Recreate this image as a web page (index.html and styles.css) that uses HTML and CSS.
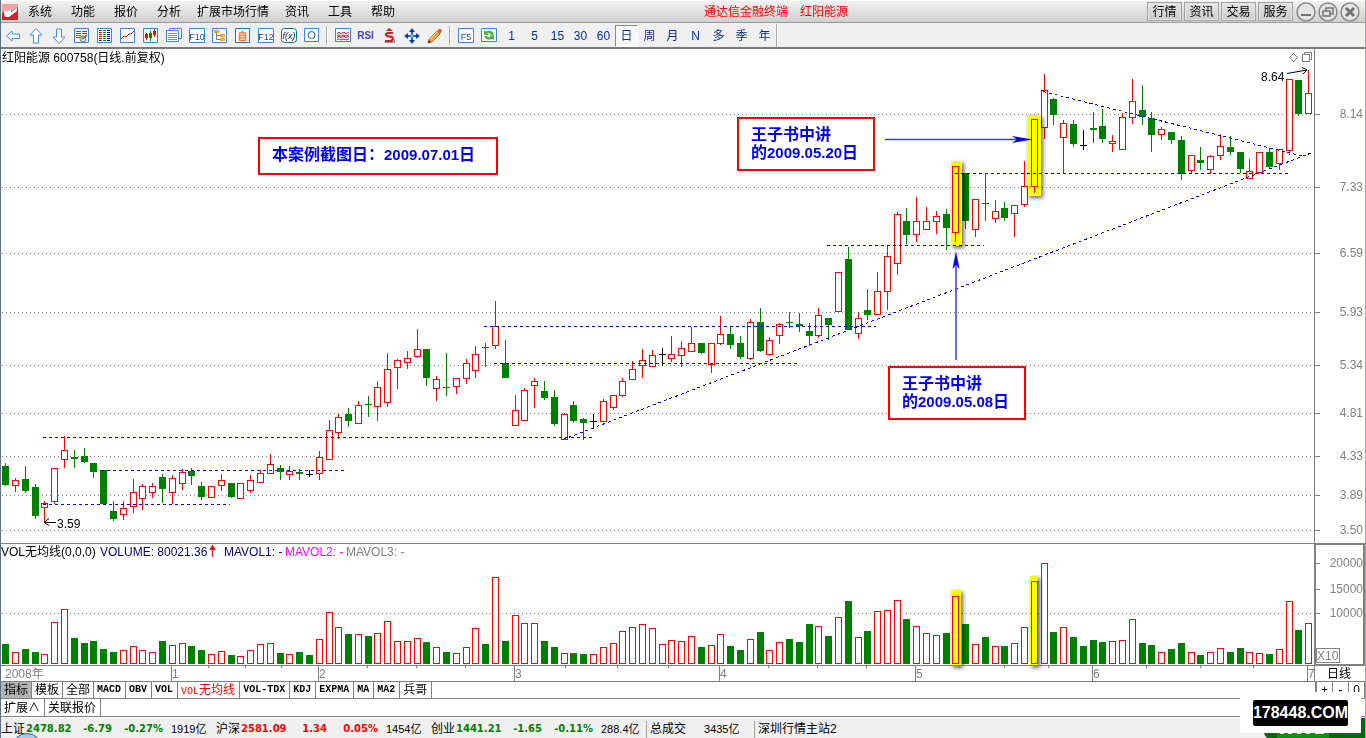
FILE: index.html
```html
<!DOCTYPE html>
<html lang="zh-CN">
<head>
<meta charset="utf-8">
<title>通达信金融终端 红阳能源</title>
<link rel="stylesheet" href="styles.css">
</head>
<body>
<div class="app">
  <header class="menubar">
    <svg class="logo" viewBox="0 0 16 16" aria-hidden="true"><rect width="16" height="16" fill="#d8202a"/><path d="M0 0h16v3l-6 4-2-3-3 5-3-2-2 3z" fill="#f3a3a0"/><path d="M2 6l3 2 4-4v4l6-4v3l-8 6-4 0-1-4z" fill="#fff"/></svg>
    <nav class="menu">
      <button type="button">系统</button><button type="button">功能</button><button type="button">报价</button><button type="button">分析</button><button type="button">扩展市场行情</button><button type="button">资讯</button><button type="button">工具</button><button type="button">帮助</button>
    </nav>
    <h1 class="title"><span>通达信金融终端</span><span>红阳能源</span></h1>
    <div class="links">
      <button type="button">行情</button><button type="button">资讯</button><button type="button">交易</button><button type="button">服务</button>
    </div>
    <div class="window-controls">
      <button type="button" aria-label="最小化"><svg viewBox="0 0 20 20"><circle cx="10" cy="10" r="9"/><path d="M5 13h10" stroke-width="2"/></svg></button>
      <button type="button" aria-label="还原"><svg viewBox="0 0 20 20"><circle cx="10" cy="10" r="9"/><path d="M8 9V6h7v6h-3M5 9h7v5H5z" stroke-width="1.500"/></svg></button>
      <button type="button" aria-label="关闭"><svg viewBox="0 0 20 20"><circle cx="10" cy="10" r="9"/><path d="M6 6l8 8M14 6l-8 8" stroke-width="3"/></svg></button>
    </div>
  </header>

  <div class="toolbar">
    <button type="button" aria-label="后退"><svg viewBox="0 0 16 16"><path class="arrow" d="M1.500 8L7 3v3h7.500v4.500H7V13z"/></svg></button>
    <button type="button" aria-label="上移"><svg viewBox="0 0 16 16"><path class="arrow" d="M8 .5l6 6.500h-3.500v8h-5V7H2z"/></svg></button>
    <button type="button" aria-label="下移"><svg viewBox="0 0 16 16"><path class="arrow" d="M8 15.500L2 9h3.500V1h5v8H14z"/></svg></button>
    <button type="button" aria-label="行情表"><svg viewBox="0 0 16 16"><path class="frame" d="M.5 .5h14v14H.5z"/><path d="M2 3.500h5M2 5.500h5M2 7.500h5M2 9.500h4" stroke="#0a8a1a"/><path d="M8 3.500h5M8 5.500h5" stroke="#d02020"/><circle cx="9" cy="11" r="3" fill="#ddd" stroke="#777"/><path d="M8 11l5-4" stroke="#777" stroke-width="2"/></svg></button>
    <button type="button" aria-label="列表"><svg viewBox="0 0 16 16"><path class="frame" d="M.5 .5h14v14H.5z"/><path d="M2 2.500h3M2 4.500h3M2 6.500h3M2 8.500h3M2 10.500h3M2 12.500h3" stroke="#e01010"/><path d="M6 2.500h3M6 4.500h3M6 6.500h3M6 8.500h3M6 10.500h3M6 12.500h3" stroke="#0a8a1a"/><path d="M10 2.500h3M10 4.500h3M10 6.500h3M10 8.500h3M10 10.500h3M10 12.500h3" stroke="#00f"/></svg></button>
    <button type="button" aria-label="分时图"><svg viewBox="0 0 16 16"><path class="frame" d="M.5 .5h14v14H.5z"/><path d="M1 11l3-3 2 1 3-3 2 0 3-3" fill="none" stroke="#d01010"/></svg></button>
    <button type="button" aria-label="K线图"><svg viewBox="0 0 16 16"><path class="frame" d="M.5 .5h14v14H.5z"/><path d="M3.500 5v7M11.500 1v8" stroke="#e01010"/><path d="M2 6h3v4H2zM10 3h3v4h-3z" fill="#e01010"/><path d="M7.500 3v10" stroke="#080"/><path d="M6 5h3v5H6z" fill="#080"/></svg></button>
    <button type="button" aria-label="多窗口"><svg viewBox="0 0 16 16"><path class="frame" d="M3.500 .5h12v10h-12z"/><path class="frame" d="M.5 2.500h12v11H.5z"/><path d="M2 5.500h9M2 7.500h9M2 9.500h9M2 11.500h9" stroke="#888"/></svg></button>
    <button type="button" aria-label="F10"><svg viewBox="0 0 16 16"><path class="frame" d="M.5 .5h15v14H.5z"/><text x="8" y="12" class="icon-text">F10</text></svg></button>
    <button type="button" aria-label="板块"><svg viewBox="0 0 16 16"><path class="frame" d="M.5 .5h14v14H.5z"/><path d="M4.500 5v6.500h4M4.500 7.500h4" fill="none" stroke="#777"/><path d="M2.500 2.500h4v2h-4zM8.500 6.500h4v2h-4zM8.500 10.500h4v2h-4z" fill="#f8c02c" stroke="#e09a10"/></svg></button>
    <button type="button" aria-label="自选"><svg viewBox="0 0 16 16"><path d="M.5 .5h14v14H.5z" fill="#fff" stroke="#1070e0"/><path d="M4.500 5h6v7.500h-6zM4.500 7.500h6M4.500 10h6M7.500 2.500V5" fill="none" stroke="#f08040" stroke-width="1.600"/></svg></button>
    <button type="button" aria-label="F12"><svg viewBox="0 0 16 16"><path class="frame" d="M.5 .5h15v14H.5z"/><text x="8" y="12" class="icon-text">F12</text></svg></button>
    <button type="button" aria-label="公式"><svg viewBox="0 0 16 16"><rect x=".5" y=".5" width="15" height="14" rx="3" fill="#fff" stroke="#087a7a"/><text x="8" y="11" class="icon-text formula">f(x)</text></svg></button>
    <button type="button" aria-label="定位"><svg viewBox="0 0 16 16"><path class="frame" d="M.5 .5h14v13H.5z"/><circle cx="7.500" cy="7" r="3.500" fill="none" stroke="#1060d0"/></svg></button>
    <span class="divider"></span>
    <button type="button" aria-label="叠加"><svg viewBox="0 0 16 16"><path class="frame" d="M.5 .5h15v13H.5z"/><path d="M2 6l2-2 2 2 3-2 2 2 3-2" fill="none" stroke="#e01010"/><path d="M2 10l2-2 2 2 3-2 2 2 3-2" fill="none" stroke="#e01010"/><path d="M2 12l2-1 2 1 3-1 2 1 3-1M2 8l2-1 2 1 3-1 2 1 3-1" fill="none" stroke="#2060e0"/></svg></button>
    <button type="button" class="rsi">RSI</button>
    <button type="button" aria-label="资金"><svg viewBox="0 0 16 16"><path d="M3 14h8l3-3v4H4z" fill="#999"/><path d="M12 5H6.500L5 6.500 6 8l5 1 1 2-1.500 2H4" fill="none" stroke="#c8202a" stroke-width="2.200"/><path d="M8 0l4 3H5z" fill="#c8202a"/></svg></button>
    <button type="button" aria-label="移动"><svg viewBox="0 0 16 16"><path d="M8 0l3 4H5zM8 16l3-4H5zM0 8l4-3v6zM16 8l-4-3v6z" fill="#0a3fa0"/><path d="M8 4v8M4 8h8" stroke="#2060c0" stroke-width="2"/><path d="M6.500 6.500h3v3h-3z" fill="#7ab0f0"/></svg></button>
    <button type="button" aria-label="画线"><svg viewBox="0 0 16 16"><path d="M1 15l1-4 8-8 3 3-8 8z" fill="#f3a23a" stroke="#9a5a10" stroke-width=".7"/><path d="M3 11l8-8" stroke="#ffe08a"/><path d="M10 3l2-2h2l1 2-2 3z" fill="#d85a4a"/><path d="M1 15l1-3 2 2z" fill="#333"/></svg></button>
    <span class="divider"></span>
    <button type="button" aria-label="F5"><svg viewBox="0 0 16 16"><path class="frame" d="M.5 .5h15v14H.5z"/><text x="8" y="12" class="icon-text">F5</text></svg></button>
    <button type="button" aria-label="刷新"><svg viewBox="0 0 16 16"><path class="frame" d="M.5 .5h15v13H.5z"/><path d="M3 7V2l2 1.500Q9 1 12.500 5V7H10Q8.500 4.500 6.500 5.500L8 7zM13 7v5l-2-1Q7 13 3.500 9.500V8H6q2 2 3.500 1L8.500 7.500z" fill="#4cb848"/></svg></button>
    <button type="button">1</button><button type="button">5</button><button type="button">15</button><button type="button">30</button><button type="button">60</button><button type="button" class="pressed" aria-pressed="true">日</button><button type="button">周</button><button type="button">月</button><button type="button">N</button><button type="button">多</button><button type="button">季</button><button type="button">年</button>
    <span class="divider end"></span>
  </div>

  <main>
    <svg id="chart" class="chart" viewBox="1 49 1364 633" role="img" aria-label="红阳能源 600758 日线">
      <g id="grid" class="grid"></g>
      <g id="candles" class="crisp"></g>
      <g id="volumes" class="crisp"></g>
      <g class="trend">
        <path d="M43 437.500H592M101 470.500H345M43 504.500H230M484 326.500H876M494 363.500H797M827 245.500H984M955 173.500H1289"/>
        <path d="M563 439.500L1315 151.500M1043 91.500L1304 156.500"/>
      </g>
      <g class="highlight">
        <rect x="951" y="161" width="11" height="85"/>
        <rect x="1027" y="115" width="14" height="81"/>
        <rect x="951" y="590" width="10" height="76"/>
        <rect x="1030" y="576" width="8" height="90"/>
      </g>
      <g class="pointer">
        <path d="M885 139.500H1018M956 360V266"/>
        <path class="head" d="M1012 136l21 3.500-21 3.500 5-3.500zM952.500 269l3.500-18 3.500 18-3.500-4z"/>
      </g>
      <g class="callout">
        <rect x="259" y="138" width="238" height="36"/>
        <text x="272" y="160">本案例截图日：<tspan class="num">2009.07.01</tspan>日</text>
        <rect x="738" y="118" width="136" height="52"/>
        <text x="751" y="140">王子书中讲</text>
        <text x="751" y="158">的<tspan class="num">2009.05.20</tspan>日</text>
        <rect x="889" y="367" width="136" height="52"/>
        <text x="902" y="389">王子书中讲</text>
        <text x="902" y="407">的<tspan class="num">2009.05.08</tspan>日</text>
      </g>
      <g class="label">
        <text x="2" y="62">红阳能源 600758(日线.前复权)</text>
        <text x="1261" y="81">8.64</text>
        <text x="57" y="528">3.59</text>
        <path d="M1287 73.500l20-3.500M1302 67.500l5 2.500-4 4M56 522.500H44M49 518.500l-5 4 5 3"/>
        <text x="1" y="556">VOL无均线(0,0,0)</text>
        <text x="100" y="556" class="navy">VOLUME: 80021.36</text>
        <text x="224" y="556" class="navy">MAVOL1: -</text>
        <text x="285" y="556" class="magenta">MAVOL2: -</text>
        <text x="346" y="556" class="gray">MAVOL3: -</text>
        <path class="up" d="M212.500 557V545M210 549.500l2.500-4 2.500 4z"/>
        <text x="1327" y="678">日线</text>
      </g>
      <g class="axis">
        <path d="M1314.500 49V682M1 543.500H1315M1 665.500H1315M1 681.500H1365"/>
        <path d="M1315 544H1364V665H1315z" class="box"/>
        <path d="M1316.500 648.500h23v14h-23z"/>
        <text x="1317" y="660">X10</text>
        <path d="M1289.500 57.500l4-4 4 4-4 4zM1304.500 54.500v-2h7v7h-2M1302.500 54.500h7v7h-7z"/>
        <text x="5" y="678">2008年</text>
      </g>
      <g id="ticks" class="axis"></g>
    </svg>

    <div class="tabs" role="tablist">
      <button type="button" role="tab" class="active">指标</button><button type="button" role="tab">模板</button><button type="button" role="tab">全部</button><button type="button" role="tab">MACD</button><button type="button" role="tab">OBV</button><button type="button" role="tab">VOL</button><button type="button" role="tab" class="current"><span>VOL</span>无均线</button><button type="button" role="tab">VOL-TDX</button><button type="button" role="tab">KDJ</button><button type="button" role="tab">EXPMA</button><button type="button" role="tab">MA</button><button type="button" role="tab">MA2</button><button type="button" role="tab">兵哥</button>
      <span class="zoom-buttons"><button type="button">+</button><button type="button">-</button><button type="button">0</button></span>
    </div>
    <div class="tabs lower"><button type="button">扩展∧</button><button type="button">关联报价</button></div>
  </main>

  <footer class="status">
    <div class="index down"><span>上证</span><b>2478.82</b><b>-6.79</b><b>-0.27%</b><small>1919亿</small></div>
    <div class="index up"><span>沪深</span><b>2581.09</b><b>1.34</b><b>0.05%</b><small>1454亿</small></div>
    <div class="index down"><span>创业</span><b>1441.21</b><b>-1.65</b><b>-0.11%</b><small>288.4亿</small></div>
    <div class="total"><span>总成交</span><small>3435亿</small></div>
    <div class="host">深圳行情主站2</div>
    <svg class="orb" viewBox="0 0 26 5" aria-hidden="true"><ellipse cx="13" cy="13" rx="14" ry="12.500" fill="#a9c9e6" stroke="#2f6296"/></svg>
  </footer>
  <div class="corner">
    <svg viewBox="0 0 104 20" aria-hidden="true"><path d="M2 0h102v20H6Q0 14 2 0z" fill="#04680c"/><path d="M16 10h52v10H16z" fill="#0b9216"/><path d="M19 15h4m4 0h4m5 0h4m5 0h4m5 0h9" stroke="#ffff9a" stroke-width="2"/></svg>
    <div class="watermark"><span>178448.COM</span></div>
  </div>
</div>
<script src="chart.js"></script>
</body>
</html>
```
FILE: styles.css
```css
* { box-sizing: border-box; }

body {
  margin: 0;
  background: #fff;
  color: #000;
  font: 12px/16px "Liberation Sans", "Noto Sans CJK SC", sans-serif;
}

button {
  margin: 0;
  padding: 0;
  border: 0;
  background: none;
  color: inherit;
  font: inherit;
  white-space: nowrap;
}

.app {
  position: relative;
  overflow: hidden;
  border-left: 1px solid #5f6e80;
  border-right: 1px solid #9aa9b6;
}

/* Menu bar */
.menubar {
  display: flex;
  align-items: center;
  height: 23px;
  border-top: 1px solid #fff;
  border-bottom: 1px solid #9a9a9a;
  background: linear-gradient(#f2f2f2, #cfcfcf);
}
.logo { width: 16px; height: 16px; margin-left: 1px; }
.menu { display: flex; gap: 19px; padding: 0 10px; }
.menu button:nth-child(5), .menu button:nth-child(6) { margin-left: -3px; }
.title {
  display: flex;
  gap: 12px;
  margin: 0 auto;
  color: #f00;
  font: inherit;
}
.links { display: flex; gap: 2px; }
.links button {
  width: 35px;
  height: 19px;
  border: 1px solid #a2a2a2;
  background: linear-gradient(#e6e6e6, #cacaca);
  box-shadow: inset 0 0 0 1px #e4e4e4;
}
.window-controls { display: flex; gap: 2px; padding: 0 5px 0 3px; }
.window-controls button, .window-controls svg { display: block; width: 20px; height: 20px; }
.window-controls svg { fill: none; stroke: #707070; }
.window-controls circle { fill: #e4e4e4; stroke: #8a8a8a; stroke-width: 1.5; }

/* Toolbar */
.toolbar {
  display: flex;
  align-items: center;
  height: 26px;
  padding-top: 1px;
  border-bottom: 2px solid #7a7a7a;
  background: #f0f0f0;
  color: #003399;
}
.toolbar button { width: 23px; height: 22px; text-align: center; }
.toolbar button svg { display: block; width: 16px; height: 16px; margin: 0 auto; overflow: visible; }
.toolbar .pressed { border: 1px solid; border-color: #888 #fff #fff #888; background: #f9f9f9; }
.toolbar .rsi { color: #4343d0; font-weight: bold; font-size: 10px; }
.divider { width: 2px; height: 19px; margin: 0 3px; background: #a8a8a8; border-right: 1px solid #fff; }
.divider.end { height: 23px; margin: 0; }
.arrow { fill: #fff; stroke: #3b8ee8; }
.frame { fill: #fff; stroke: #3b82ea; }
.icon-text { fill: #1747b0; font-size: 9px; text-anchor: middle; }
.formula { fill: #102070; font-style: italic; }

/* Chart */
.chart { display: block; width: 100%; height: auto; }
.crisp, .grid, .trend, .axis { shape-rendering: crispEdges; }
.grid { fill: none; stroke: #808080; stroke-dasharray: 1 3; }
.rise { fill: #fff; stroke: #f00; }
.fall { fill: #008000; stroke: #008000; }
.flat { fill: #000; stroke: #000; }
.trend { fill: none; stroke: #00f; stroke-dasharray: 3 3; }
.highlight { fill: #ff0; mix-blend-mode: multiply; filter: drop-shadow(2px 2px 2px rgba(0, 0, 0, .6)); }
.pointer { fill: none; stroke: #3838ff; stroke-width: 1.5; }
.pointer .head { fill: #00f; stroke: none; }
.callout rect { fill: #fff; stroke: #f00; stroke-width: 2; }
.callout text { fill: #00f; font-size: 16px; font-weight: bold; }
.callout .num { font-size: 15px; }
.label path { fill: none; stroke: #000; }
.label .up { fill: #f00; stroke: #f00; }
.label .navy { fill: #000080; }
.label .magenta { fill: #f0f; }
.label .gray { fill: #808080; }
.axis path { fill: none; stroke: #808080; }
.axis .box { stroke-width: 2; }
.axis text { fill: #808080; }
.axis .end { text-anchor: end; }

/* Indicator tabs */
.tabs {
  display: flex;
  height: 17px;
  border-bottom: 1px solid #808080;
}
.tabs button {
  padding: 0 4px 0 3px;
  border-right: 1px solid #808080;
  font: bold 10px/16px "Liberation Mono", "Noto Sans CJK SC", monospace;
}
.tabs button:nth-child(-n+3), .tabs button:nth-child(13), .tabs .current, .tabs.lower button { font: inherit; }
.tabs button:nth-child(-n+3) { padding: 0 3px; }
.tabs .active { background: #b4b4b4; }
.tabs .current { color: #f00; }
.tabs .current span { font: 10px/16px "Liberation Mono", monospace; }
.tabs.lower { height: 18px; }
.tabs.lower button { padding: 0 4px 0 3px; }
.tabs .zoom-buttons { display: flex; margin-left: auto; border-left: 2px solid #808080; }
.tabs .zoom-buttons button { width: 16px; padding: 0; text-align: center; }

/* Status bar */
.status {
  position: relative;
  display: flex;
  height: 21px;
  padding-top: 3px;
  border-top: 1px solid #fff;
  background: #f0f0f0;
  white-space: nowrap;
}
.index { display: grid; grid-template-columns: 25px 47px 39px 51px 53px; }
.index b { font: bold 10px/16px "DejaVu Sans", sans-serif; }
.index b + b { text-align: right; }
.status small { padding-left: 8px; font-size: 11px; }
.down b { color: #008000; }
.up b { color: #f00; }
.total, .host { padding-left: 3px; border-left: 1px solid #a0a0a0; }
.total { width: 108px; }
.total small { padding-left: 18px; }
.orb { position: absolute; left: 13px; bottom: 0; width: 26px; height: 5px; }

/* Corner mark */
.corner { position: absolute; right: 0; bottom: 0; width: 104px; height: 20px; }
.corner > svg { display: block; width: 104px; height: 20px; }
.watermark {
  position: absolute;
  right: 4px;
  bottom: 5px;
  display: flex;
  align-items: center;
  justify-content: center;
  width: 121px;
  height: 41px;
  background: #fff;
}
.watermark span {
  border-radius: 2px;
  background: #000;
  color: #fff;
  font: bold 16px/26px "Liberation Sans", sans-serif;
}
```
FILE: chart.js
```javascript
// One row per trading day: kind, high, open/close top, open/close bottom, low, volume kind, volume top.
// Kinds: r rise, g fall, k flat. Values are in chart units (y grows downwards).
const days = `
g 463 466 485 486 g 644|r 478 480 486 492 r 652|g 466 479 491 493 g 649|g 484 487 516 519 g 652
r 501 503 508 523 r 654|r 468 468 502 504 r 622|r 436 450 460 468 r 609|g 450 457 459 468 g 638
g 448 456 462 463 g 643|g 463 463 472 478 g 641|g 470 470 504 504 g 649|g 501 511 519 521 g 652
r 501 508 515 520 r 650|r 479 492 507 513 r 646|r 484 486 499 510 r 650|r 483 486 493 498 r 652
g 474 477 489 503 g 641|r 475 478 493 504 r 645|r 469 472 484 490 r 643|g 468 471 476 485 g 646
g 482 486 497 500 g 650|r 486 486 498 498 r 654|r 474 480 486 491 r 651|g 483 483 497 498 g 655
r 483 483 499 499 r 656|r 475 480 491 493 r 650|r 470 473 483 483 r 644|r 454 464 474 474 r 643
g 465 468 472 480 g 653|r 466 471 475 480 r 654|g 469 472 474 480 g 652|k 470 474 475 477 g 655
r 451 457 474 480 r 639|r 420 430 460 460 r 612|r 414 417 433 439 r 627|g 408 414 421 427 g 634
r 401 405 424 424 r 634|g 396 404 405 417 g 636|r 381 387 407 421 r 633|r 353 369 403 407 r 621
r 359 360 368 389 r 641|r 351 358 363 369 r 641|r 329 349 357 358 r 638|g 349 349 378 386 g 642
r 376 379 389 401 r 647|g 353 387 388 396 g 652|r 378 378 387 394 r 653|r 359 363 379 384 r 647
r 346 354 371 378 r 628|g 343 347 348 367 g 644|r 301 326 346 349 r 577|g 340 363 378 378 g 641
r 395 410 426 426 r 615|r 388 390 421 421 r 623|r 378 381 386 408 r 623|g 381 391 398 400 g 641
g 390 397 424 426 g 647|r 413 414 440 440 r 653|g 401 405 421 423 g 653|g 418 419 423 440 g 654
k 414 421 422 429 r 654|r 399 401 422 422 r 647|r 395 395 408 410 r 643|r 378 381 396 397 r 631
r 361 369 380 380 r 627|r 349 360 366 378 r 624|r 350 355 367 367 r 628|k 348 354 355 366 r 644
r 336 354 359 362 r 640|r 341 348 356 367 r 641|r 327 343 352 352 r 636|g 343 343 353 354 g 647
r 343 343 365 373 r 645|r 316 334 344 345 r 634|g 327 334 345 349 g 646|g 336 343 357 359 g 650
r 319 322 359 360 r 639|g 308 322 351 352 g 632|r 337 340 355 356 r 650|r 323 324 336 344 r 642
g 312 322 323 328 g 639|g 313 324 326 332 g 642|g 323 331 336 346 g 624|r 308 315 336 338 r 626
g 318 318 325 340 g 636|r 272 272 312 312 r 617|g 247 259 330 330 g 601|r 312 318 334 339 r 637
g 289 310 315 320 g 631|r 272 291 315 315 r 611|r 245 256 292 310 r 610|r 212 214 264 275 r 600
g 208 221 235 244 g 619|r 197 221 235 242 r 626|r 207 221 230 230 r 633|r 211 216 222 234 r 635
g 209 214 228 250 g 633|r 166 166 233 242 r 596|g 173 173 221 229 g 624|r 199 199 230 237 r 644
g 173 203 204 221 g 637|r 200 211 219 223 r 646|g 202 208 218 221 g 646|r 205 205 214 237 r 643
r 161 186 205 207 r 627|r 119 119 187 193 r 581|r 74 90 128 139 r 563|g 98 99 115 125 g 632
r 120 123 138 173 r 627|g 120 124 144 147 g 637|k 130 145 146 150 g 646|g 112 128 130 143 g 640
g 109 126 139 143 g 642|r 135 141 144 152 r 641|r 113 117 150 150 r 640|r 79 101 118 124 r 619
g 85 110 117 125 g 643|g 112 118 135 152 g 645|r 127 129 135 140 r 652|g 132 132 140 144 g 649
g 136 140 174 180 g 643|r 155 155 171 173 r 652|g 147 160 163 170 g 655|r 155 156 170 174 r 652
r 134 146 156 160 r 648|g 136 147 152 155 g 652|g 152 152 169 173 g 648|r 159 171 179 179 r 652
r 152 152 173 173 r 653|g 148 152 167 169 g 654|r 149 149 164 170 r 649|r 79 79 151 155 r 601
g 80 80 114 116 g 630|r 70 93 114 114 r 623`.trim().split(/[|\n]/).map(row => row.split(" "));

const kinds = { r: "rise", g: "fall", k: "flat" };
const bodyWidth = 7;
const volumeBase = 664;

function bar(kind, x, top, bottom) {
  if (bottom - top < 2) {
    return `<path class="${kinds[kind]}" d="M${x} ${top + 0.5}h${bodyWidth}"/>`;
  }
  return `<rect class="${kinds[kind]}" x="${x + 0.5}" y="${top + 0.5}" width="${bodyWidth - 1}" height="${bottom - top - 1}"/>`;
}

let candles = "";
let volumes = "";
days.forEach(([kind, high, top, bottom, low, volumeKind, volumeTop], i) => {
  const x = Math.round(2.25 + i * 9.796);
  candles += `<path class="${kinds[kind]}" d="M${x + 3.5} ${high}V${low}"/>` + bar(kind, x, +top, +bottom);
  volumes += bar(volumeKind, x, +volumeTop, volumeBase);
});
document.getElementById("candles").innerHTML = candles;
document.getElementById("volumes").innerHTML = volumes;

const prices = [["8.14", 114], ["7.33", 187], ["6.59", 253], ["5.93", 312], ["5.34", 365],
  ["4.81", 413], ["4.33", 456], ["3.89", 495], ["3.50", 530]];
const amounts = [["20000", 563], ["15000", 589], ["10000", 613]];
const months = [["1", 171], ["2", 318], ["3", 514], ["4", 719], ["5", 915], ["6", 1092], ["7", 1307]];
const weeks = [208, 245, 281, 367, 416, 465, 565, 617, 668, 768, 817, 866, 959, 1004, 1048, 1146, 1200, 1253];

document.getElementById("grid").innerHTML = [...prices.map(p => p[1]), 613]
  .map(y => `<path d="M2 ${y + 0.5}H1314"/>`).join("");

document.getElementById("ticks").innerHTML =
  [...prices, ...amounts].map(([text, y]) =>
    `<path d="M1315 ${y + 0.5}h5"/><text class="end" x="1363" y="${y + 4}">${text}</text>`).join("") +
  months.map(([text, x]) => `<path d="M${x + 0.5} 666v15"/><text x="${x + 1}" y="678">${text}</text>`).join("") +
  weeks.map(x => `<path d="M${x + 0.5} 666v2"/>`).join("");
```
